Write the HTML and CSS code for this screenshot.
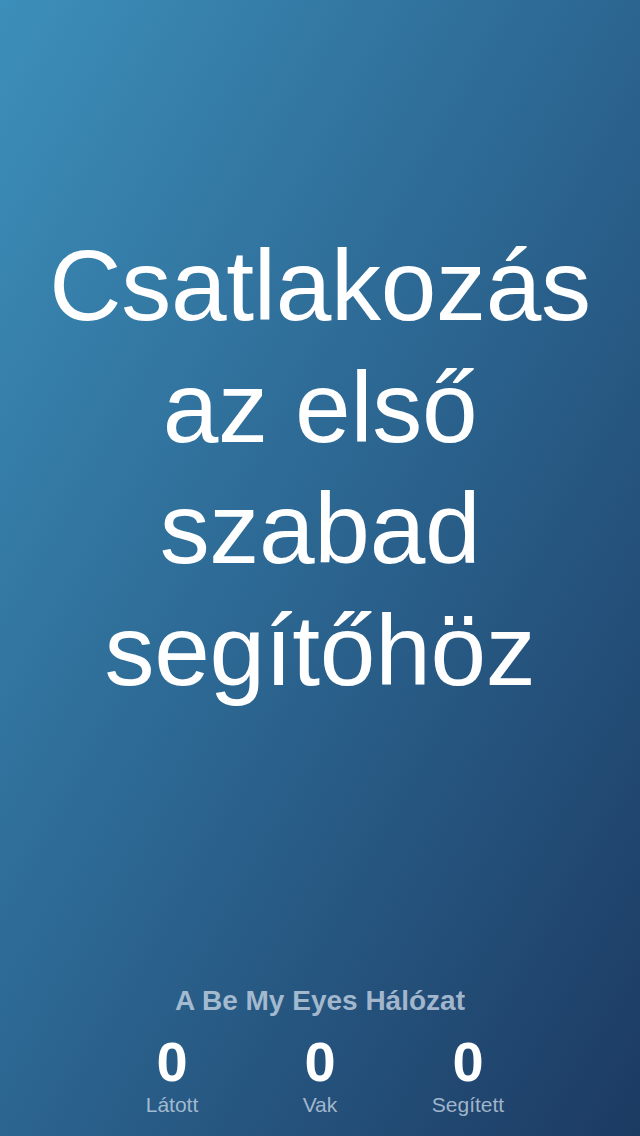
FILE: index.html
```html
<!DOCTYPE html>
<html lang="hu">
<head>
<meta charset="utf-8">
<title>Be My Eyes</title>
<link rel="stylesheet" href="styles.css">
</head>
<body>
<main class="screen">
  <h1 class="headline">Csatlakozás az első szabad segítőhöz</h1>
  <section class="network">
    <h2 class="network-title">A Be My Eyes Hálózat</h2>
    <div class="stats">
      <div class="stat"><span class="stat-num">0</span><span class="stat-label">Látott</span></div>
      <div class="stat"><span class="stat-num">0</span><span class="stat-label">Vak</span></div>
      <div class="stat"><span class="stat-num">0</span><span class="stat-label">Segített</span></div>
    </div>
  </section>
</main>
</body>
</html>
```
FILE: styles.css
```css
html, body {
  margin: 0;
  padding: 0;
}
body {
  width: 640px;
  height: 1136px;
  overflow: hidden;
  font-family: "Liberation Sans", Arial, sans-serif;
}
.screen {
  width: 640px;
  height: 1136px;
  box-sizing: border-box;
  background: linear-gradient(to bottom right, #3c8fba 0%, #2b6590 50%, #1c3a62 100%);
  display: flex;
  flex-direction: column;
  align-items: center;
  color: #fff;
}
.headline {
  margin: 225px 0 0;
  width: 620px;
  text-align: center;
  font-weight: normal;
  font-size: 100px;
  line-height: 121.5px;
  letter-spacing: -0.3px;
  color: #fff;
}
.network {
  margin-top: auto;
  padding-bottom: 19px;
  display: flex;
  flex-direction: column;
  align-items: center;
}
.network-title {
  margin: 0;
  font-size: 28px;
  font-weight: bold;
  color: rgba(205, 218, 232, 0.75);
  line-height: 30px;
}
.stats {
  display: grid;
  grid-template-columns: repeat(3, 148px);
  margin-top: 22px;
}
.stat {
  display: flex;
  flex-direction: column;
  align-items: center;
}
.stat-num {
  font-size: 56px;
  font-weight: bold;
  line-height: 48px;
  height: 48px;
  color: #fff;
}
.stat-label {
  margin-top: 7px;
  font-size: 21px;
  line-height: 24px;
  color: rgba(205, 218, 232, 0.75);
}
```
